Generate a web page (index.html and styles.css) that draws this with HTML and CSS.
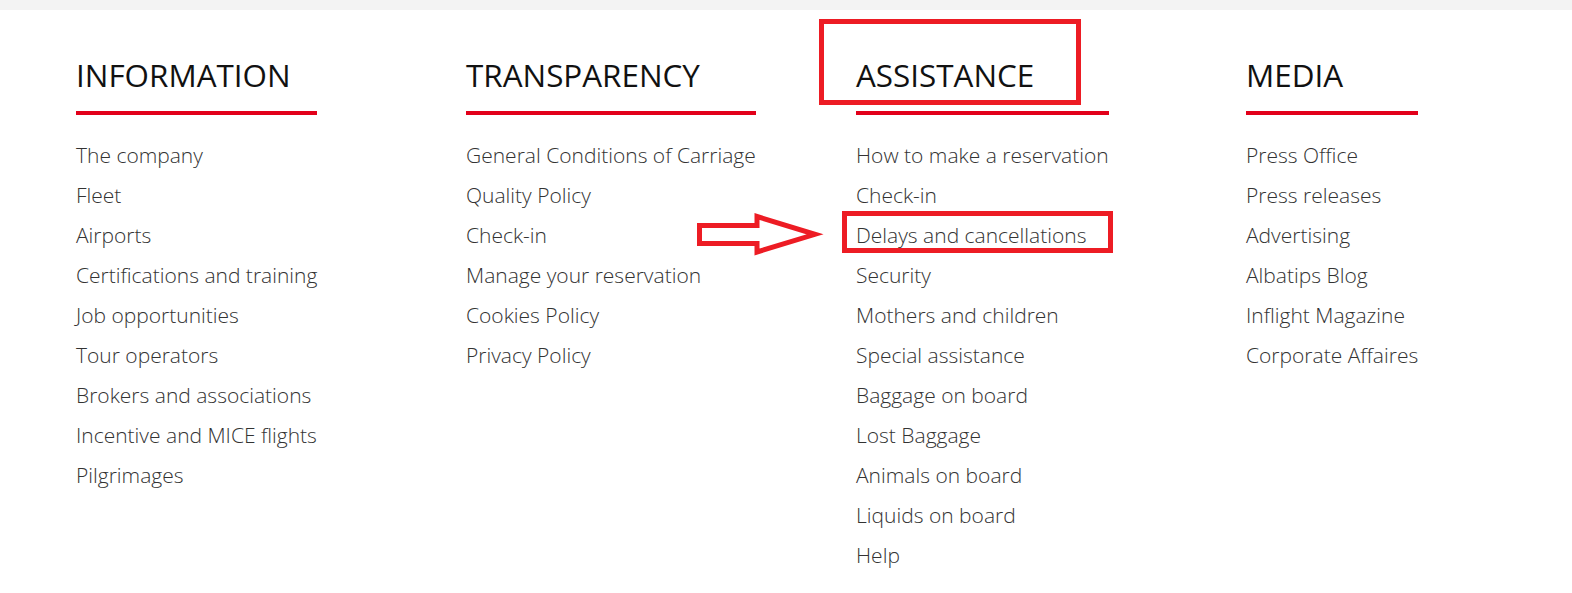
FILE: index.html
```html
<!DOCTYPE html>
<html lang="en">
<head>
<meta charset="UTF-8">
<title>footer links</title>
<link rel="stylesheet" href="styles.css">
</head>
<body>
<div class="topbar"></div>

<div class="footer">
  <div class="col">
    <h3 class="col-title">INFORMATION</h3>
    <ul class="links">
      <li><a href="#">The company</a></li>
      <li><a href="#">Fleet</a></li>
      <li><a href="#">Airports</a></li>
      <li><a href="#">Certifications and training</a></li>
      <li><a href="#">Job opportunities</a></li>
      <li><a href="#">Tour operators</a></li>
      <li><a href="#">Brokers and associations</a></li>
      <li><a href="#">Incentive and MICE flights</a></li>
      <li><a href="#">Pilgrimages</a></li>
    </ul>
  </div>
  <div class="col">
    <h3 class="col-title">TRANSPARENCY</h3>
    <ul class="links">
      <li><a href="#">General Conditions of Carriage</a></li>
      <li><a href="#">Quality Policy</a></li>
      <li><a href="#">Check-in</a></li>
      <li><a href="#">Manage your reservation</a></li>
      <li><a href="#">Cookies Policy</a></li>
      <li><a href="#">Privacy Policy</a></li>
    </ul>
  </div>
  <div class="col">
    <h3 class="col-title">ASSISTANCE</h3>
    <ul class="links">
      <li><a href="#">How to make a reservation</a></li>
      <li><a href="#">Check-in</a></li>
      <li><a href="#">Delays and cancellations</a></li>
      <li><a href="#">Security</a></li>
      <li><a href="#">Mothers and children</a></li>
      <li><a href="#">Special assistance</a></li>
      <li><a href="#">Baggage on board</a></li>
      <li><a href="#">Lost Baggage</a></li>
      <li><a href="#">Animals on board</a></li>
      <li><a href="#">Liquids on board</a></li>
      <li><a href="#">Help</a></li>
    </ul>
  </div>
  <div class="col">
    <h3 class="col-title">MEDIA</h3>
    <ul class="links">
      <li><a href="#">Press Office</a></li>
      <li><a href="#">Press releases</a></li>
      <li><a href="#">Advertising</a></li>
      <li><a href="#">Albatips Blog</a></li>
      <li><a href="#">Inflight Magazine</a></li>
      <li><a href="#">Corporate Affaires</a></li>
    </ul>
  </div>
</div>

<!-- annotation marks drawn on top of the screenshot -->
<svg class="marks" width="1572" height="593" viewBox="0 0 1572 593">
  <rect x="821.5" y="21.5" width="257" height="81" fill="none" stroke="#ed1c24" stroke-width="5"/>
  <rect x="844.5" y="213.5" width="266" height="37" fill="none" stroke="#ed1c24" stroke-width="5"/>
  <path d="M699.5 225.5 L757 225.5 L757 216.5 L815 234.3 L757 252 L757 243.5 L699.5 243.5 Z" fill="none" stroke="#ed1c24" stroke-width="5" stroke-linejoin="miter"/>
</svg>
</body>
</html>
```

FILE: styles.css
```css
html, body{
  margin:0;
  padding:0;
  background:#fff;
  font-family:"Open Sans", Arial, sans-serif;
}

.topbar{
  height:10px;
  background:#f3f3f3;
}

.footer{
  display:grid;
  grid-template-columns:repeat(4, 390px);
  justify-items:start;
  padding:47px 0 0 76px;
}

.col{
  display:inline-block;
}

.col-title{
  margin:0;
  padding-bottom:18px;
  font-size:31.4px;
  font-weight:400;
  line-height:36px;
  color:#111;
  border-bottom:4px solid #e2001a;
}

.links{
  list-style:none;
  margin:0;
  padding:20px 0 0 0;
}

.links li{
  line-height:40px;
  font-size:21px;
}

.links a{
  color:#333;
  font-weight:300;
  text-decoration:none;
  white-space:nowrap;
}

.marks{
  position:absolute;
  left:0;
  top:0;
  pointer-events:none;
}
```
